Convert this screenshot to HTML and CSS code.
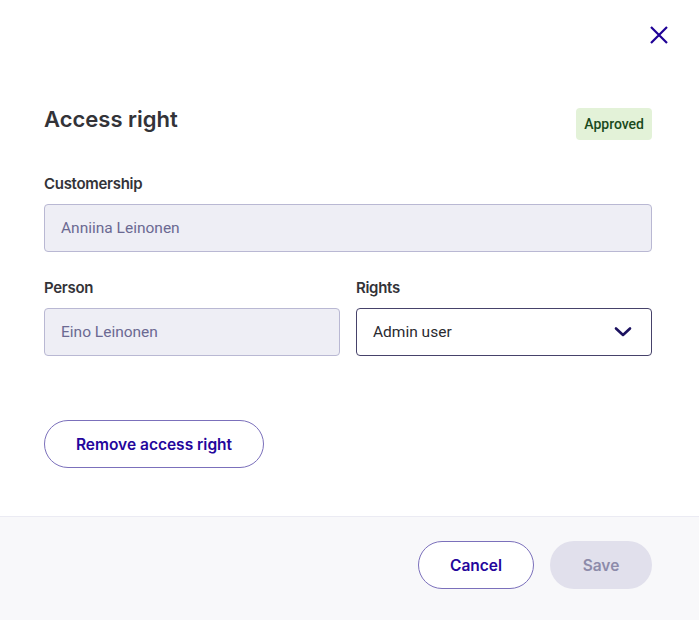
FILE: index.html
```html
<!DOCTYPE html>
<html lang="en">
<head>
<meta charset="utf-8">
<title>Access right</title>
<link rel="stylesheet" href="styles.css">
</head>
<body>
<div class="dialog">
  <div class="topbar">
    <button class="close" aria-label="Close">
      <svg width="20" height="20" viewBox="0 0 20 20"><path d="M2 2 L18 18 M18 2 L2 18" stroke="#1e0096" stroke-width="2.2" fill="none"/></svg>
    </button>
  </div>
  <div class="body">
    <div class="header">
      <h1 class="title">Access right</h1>
      <span class="badge">Approved</span>
    </div>
    <div class="field">
      <label class="label">Customership</label>
      <div class="input disabled">Anniina Leinonen</div>
    </div>
    <div class="row">
      <div class="field">
        <label class="label">Person</label>
        <div class="input disabled">Eino Leinonen</div>
      </div>
      <div class="field">
        <label class="label">Rights</label>
        <div class="input select">
          <span>Admin user</span>
          <svg width="18" height="12" viewBox="0 0 18 12"><path d="M2 2.5 L9 9 L16 2.5" stroke="#1c1260" stroke-width="2.6" fill="none" stroke-linecap="round" stroke-linejoin="round"/></svg>
        </div>
      </div>
    </div>
    <button class="btn btn-outline remove">Remove access right</button>
  </div>
  <div class="footer">
    <button class="btn btn-outline cancel">Cancel</button>
    <button class="btn btn-disabled save">Save</button>
  </div>
</div>
</body>
</html>
```

FILE: styles.css
```css
* { box-sizing: border-box; }
html, body { margin: 0; padding: 0; background: #fff; }
body { font-family: Inter, "Noto Sans", sans-serif; color: #333338; }
.dialog { width: 699px; height: 620px; display: flex; flex-direction: column; }
.topbar { height: 72px; display: flex; justify-content: flex-end; align-items: flex-start; padding: 24px 29px 0 0; }
.close { background: none; border: 0; padding: 0; width: 22px; height: 22px; display: flex; align-items: center; justify-content: center; cursor: pointer; }
.body { flex: 1; padding: 36px 47px 0 44px; }
.header { display: flex; justify-content: space-between; align-items: flex-start; margin-bottom: 32px; }
.title { margin: -3px 0 0 0; font-size: 22px; line-height: 28px; font-weight: 600; color: #333338; letter-spacing: 0; }
.badge { display: inline-block; height: 32px; line-height: 32px; padding: 0 8px; border-radius: 4px; background: #e3f2d8; color: #1a4a1c; font-family: Roboto, sans-serif; font-size: 14px; font-weight: 500; }
.field { display: flex; flex-direction: column; }
.label { font-size: 15px; line-height: 24px; font-weight: 600; color: #333338; margin-bottom: 8px; letter-spacing: -0.3px; }
.input { height: 48px; border-radius: 4px; border: 1px solid #b9b8d3; padding: 0 16px; display: flex; align-items: center; font-family: Roboto, sans-serif; font-size: 15.5px; }
.input.disabled { background: #eeeef5; color: #6b6992; }
.input.select { background: #fff; border-color: #46426a; color: #2a2a30; justify-content: space-between; padding-right: 19px; }
.row { display: grid; grid-template-columns: 1fr 1fr; gap: 16px; margin-top: 24px; }
.btn { height: 48px; border-radius: 24px; font-family: Inter, sans-serif; font-size: 15.5px; font-weight: 600; padding: 0; cursor: pointer; }
.btn-outline { background: #fff; border: 1px solid #7b70bb; color: #24069c; }
.btn-disabled { background: #e1e0ec; border: 0; color: #8d8baa; }
.remove { margin-top: 64px; width: 220px; }
.footer { height: 104px; background: #f8f8fa; border-top: 1px solid #ebebf3; display: flex; justify-content: flex-end; align-items: flex-start; gap: 16px; padding: 24px 47px 0 0; }
.cancel { width: 116px; }
.save { width: 102px; }
```
